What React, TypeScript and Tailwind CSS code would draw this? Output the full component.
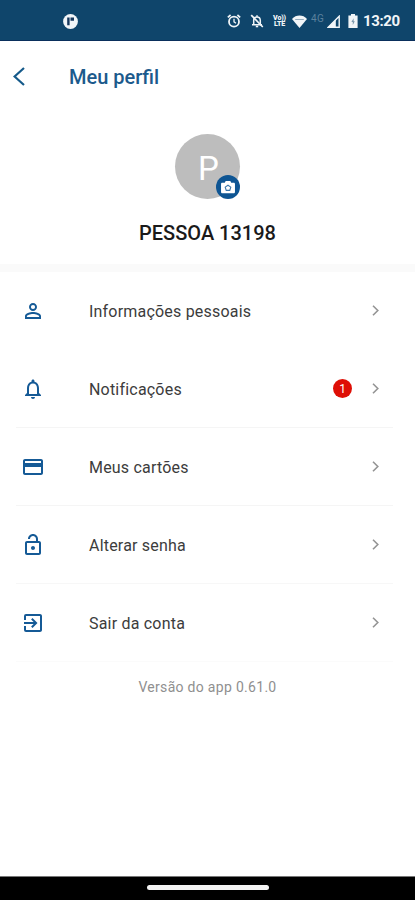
import type { IconType } from "react-icons";
import {
  MdCreditCard,
  MdExitToApp,
  MdNotificationsNone,
  MdOutlineLockOpen,
  MdPersonOutline,
} from "react-icons/md";

interface MenuItem {
  label: string;
  icon: IconType;
  badge?: number;
  border: string;
}

const items: MenuItem[] = [
  { label: "Informações pessoais", icon: MdPersonOutline, border: "border-transparent" },
  { label: "Notificações", icon: MdNotificationsNone, badge: 1, border: "border-[#f5f5f5]" },
  { label: "Meus cartões", icon: MdCreditCard, border: "border-[#f5f5f5]" },
  { label: "Alterar senha", icon: MdOutlineLockOpen, border: "border-[#f7f7f7]" },
  { label: "Sair da conta", icon: MdExitToApp, border: "border-[#fbfbfb]" },
];

function StatusBar() {
  return (
    <div className="flex h-[41px] shrink-0 items-center border-b border-[#0a2f5c] bg-[#0f456b] pt-[2px] pl-[63px] text-[#f1f5f8]">
      <svg className="h-[15px] w-[15px]" viewBox="0 0 15 15">
        <circle cx="7.5" cy="7.5" r="7.4" fill="#f1f5f8" />
        <path d="M4.2 3.5h2.4v7.8H4.2zM7.5 3.5h3.5v3.3H7.5z" fill="#15365b" />
      </svg>

      {/* Alarm */}
      <svg className="ml-[149px] h-[14px] w-[14px]" viewBox="0 0 14 14" fill="none" stroke="currentColor">
        <circle cx="7" cy="7.7" r="5" strokeWidth="1.8" />
        <path d="M.8 3.3 3.6 1M13.2 3.3 10.4 1" strokeWidth="1.7" />
        <path d="M7 4.8v3.1l2 1.4" strokeWidth="1.3" />
      </svg>

      {/* Muted bell */}
      <svg className="ml-[9px] h-[14px] w-[14px]" viewBox="0 0 14 14" fill="none" stroke="currentColor">
        <path d="M2 10.7h10M3.7 10V6.5C3.7 4.5 5 3 7 3s3.3 1.5 3.3 3.5V10M7 1.3V3" strokeWidth="1.5" />
        <path d="M5.8 12.5h2.4" strokeWidth="1.6" />
        <path d="M1.2 1.2 12.8 13" strokeWidth="1.7" />
      </svg>

      <div className="ml-[8px] w-[15px] text-center text-[7px] leading-[6.5px] font-black tracking-[-0.1px]">
        <div>Vo))</div>
        <div>LTE</div>
      </div>

      {/* Wi-Fi */}
      <svg className="ml-[5px] h-[13px] w-[15px]" viewBox="0 0 15 13">
        <path d="M0 4C4-.6 11-.6 15 4L7.5 13z" fill="currentColor" />
        <path d="M3.2 4.5h8.6" stroke="#7f9cb1" strokeWidth="0.8" fill="none" />
      </svg>

      <span className="ml-[4px] w-[14px] -translate-y-[2px] text-[10px] leading-none tracking-[0.5px] text-[#5b819d]">4G</span>

      {/* Signal */}
      <svg className="ml-[2px] h-[13px] w-[13px]" viewBox="0 0 13 13">
        <path d="M12.2 1.2V12.2H1.2z" fill="none" stroke="currentColor" strokeWidth="1.4" />
        <path d="M8.8 4.4v8H1z" fill="currentColor" />
      </svg>

      {/* Battery */}
      <svg className="ml-[8px] h-[14px] w-[10px]" viewBox="0 0 10 14">
        <path d="M3 0h4v1.5h2.6V14H.4V1.5H3z" fill="currentColor" />
        <path d="M5.6 4.2 3.4 8h1.4v3L6.8 7.2H5.6z" fill="#7b97ac" />
      </svg>

      <span className="ml-[5px] text-[15px] leading-none font-bold tracking-[-0.4px]">13:20</span>
    </div>
  );
}

function Avatar() {
  return (
    <div className="relative flex h-[65px] w-[65px] items-center justify-center rounded-full bg-[#bdbdbd]">
      <span className="pt-[3px] pl-[2px] text-[33px] leading-none text-white">P</span>
      <div className="absolute right-0 bottom-0 flex h-6 w-6 items-center justify-center rounded-full bg-[#0e5593]">
        <svg className="h-[13px] w-[14px]" viewBox="0 0 15 14">
          <path d="M5 0h5l1 1.8h2.6c.8 0 1.4.6 1.4 1.4v8.6c0 .8-.6 1.4-1.4 1.4H1.4C.6 13.2 0 12.6 0 11.8V3.2c0-.8.6-1.4 1.4-1.4H4z" fill="#fff" />
          <path d="m7.5 4.5 3 2.1-1.1 3.5H5.6L4.5 6.6z" fill="none" stroke="#3d78ab" strokeWidth="1.2" />
        </svg>
      </div>
    </div>
  );
}

function MenuRow({ label, icon: Icon, badge, border }: MenuItem) {
  return (
    <button className={`flex h-[78px] w-full items-center border-b pl-[5px] ${border}`}>
      <Icon className="h-6 w-6 text-[#155a96]" />
      <span className="ml-11 flex-1 pt-[2px] text-left text-[16px] tracking-[0.2px] text-[#3c3c3c]">{label}</span>
      {badge && (
        <span className="mr-5 flex h-[19px] w-[19px] items-center justify-center rounded-full bg-[#de0f06] pt-px text-[12px] text-white">
          {badge}
        </span>
      )}
      <svg className="mr-[14px] h-[11px] w-[7px]" viewBox="0 0 7 11" fill="none" stroke="#949494" strokeWidth="1.6">
        <path d="M1 .8 5.8 5.5 1 10.2" />
      </svg>
    </button>
  );
}

export default function App() {
  return (
    <div className="flex h-[900px] w-[415px] flex-col overflow-hidden bg-white font-['Roboto',sans-serif]">
      <StatusBar />

      <header className="flex h-[72px] shrink-0 items-center pl-[13px]">
        <svg className="mb-px h-[19px] w-[12px]" viewBox="0 0 12 19" fill="none" stroke="#155a8a" strokeWidth="2.2">
          <path d="M11 1 1.6 9.5 11 18" />
        </svg>
        <h1 className="ml-[44px] text-[20px] leading-6 font-medium text-[#1c5a8c]">Meu perfil</h1>
      </header>

      <section className="flex h-[151px] shrink-0 flex-col items-center pt-[21px]">
        <Avatar />
        <h2 className="mt-[22px] text-[20px] leading-6 font-medium text-[#1a1a1a]">PESSOA 13198</h2>
      </section>
      <div className="h-2 shrink-0 bg-[#fafafa]" />

      <nav className="pr-[22px] pl-4">
        {items.map((item) => (
          <MenuRow key={item.label} {...item} />
        ))}
      </nav>

      <p className="mt-[15px] text-center text-[14px] leading-5 tracking-[0.3px] text-[#8f8f8f]">Versão do app 0.61.0</p>

      {/* Gesture bar */}
      <div className="mt-auto flex h-6 shrink-0 items-center justify-center border-t border-[#777] bg-black">
        <div className="h-[5px] w-[122px] -translate-y-px rounded-full bg-[#f4f4f4]" />
      </div>
    </div>
  );
}
